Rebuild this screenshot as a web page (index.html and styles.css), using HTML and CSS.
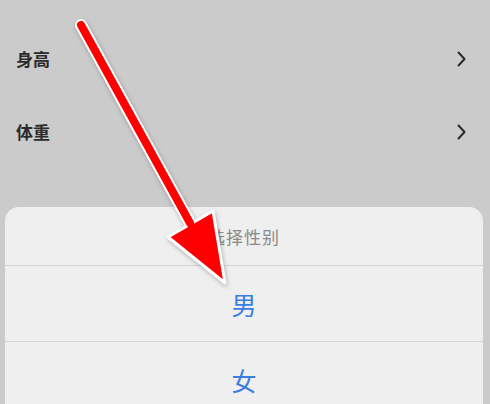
FILE: index.html
```html
<!DOCTYPE html>
<html lang="zh-CN">

<head>
    <meta charset="UTF-8" />
    <meta name="viewport" content="width=device-width, initial-scale=1.0" />
    <title>选择性别</title>
    <link rel="stylesheet" href="styles.css">
</head>

<body>

    <main class="page">
        <ul class="list">
            <li class="row">
                <span class="label">身高</span>
                <svg class="chev" width="9" height="16" viewBox="0 0 9 16">
                    <path d="M1.5 1.5 L7.5 8 L1.5 14.5" />
                </svg>
            </li>
            <li class="row">
                <span class="label">体重</span>
                <svg class="chev" width="9" height="16" viewBox="0 0 9 16">
                    <path d="M1.5 1.5 L7.5 8 L1.5 14.5" />
                </svg>
            </li>
        </ul>

        <div class="sheet">
            <div class="sheet-title">选择性别</div>
            <div class="option">男</div>
            <div class="option">女</div>
        </div>
    </main>

    <!-- annotation arrow laid over the screenshot -->
    <svg class="arrow" width="490" height="404" viewBox="0 0 490 404">
        <line x1="81" y1="25" x2="190" y2="223" stroke="#fff" stroke-width="12" stroke-linecap="round" />
        <polygon points="168,237 213,211 225,283" fill="#ff0000" stroke="#fff" stroke-width="3" stroke-linejoin="round" />
        <line x1="81" y1="25" x2="190" y2="223" stroke="#ff0000" stroke-width="8" stroke-linecap="round" />
    </svg>

</body>

</html>
```

FILE: styles.css
```css
* {
    margin: 0;
    padding: 0;
    box-sizing: border-box;
    font-family: 'Noto Sans CJK SC', 'Noto Sans', sans-serif;
}

body {
    background: #cbcbcb;
    width: 490px;
    height: 404px;
    overflow: hidden;
    position: relative;
}

.page {
    display: flex;
    flex-direction: column;
    padding-top: 22px;
}

.list {
    list-style: none;
}

.row {
    height: 73px;
    display: flex;
    align-items: center;
    justify-content: space-between;
    padding: 0 24px 0 16px;
}

.label {
    font-size: 17px;
    font-weight: bold;
    color: #2b2b2b;
}

.chev path {
    fill: none;
    stroke: #2b2b2b;
    stroke-width: 2;
    stroke-linecap: round;
    stroke-linejoin: round;
}

.sheet {
    margin: 39px 7px 0 5px;
    background: #efefef;
    border-radius: 14px 14px 0 0;
    height: 197px;
    overflow: hidden;
}

.sheet-title {
    height: 59px;
    display: flex;
    align-items: center;
    justify-content: center;
    font-size: 17px;
    color: #8a8a8a;
    border-bottom: 1px solid #d4d4d4;
    letter-spacing: 1px;
}

.option {
    height: 76px;
    display: flex;
    align-items: center;
    justify-content: center;
    font-size: 25px;
    color: #3b7de0;
    border-bottom: 1px solid #d4d4d4;
}

.arrow {
    position: absolute;
    left: 0;
    top: 0;
    filter: drop-shadow(1px 2px 2px rgba(0, 0, 0, 0.25));
}
```
